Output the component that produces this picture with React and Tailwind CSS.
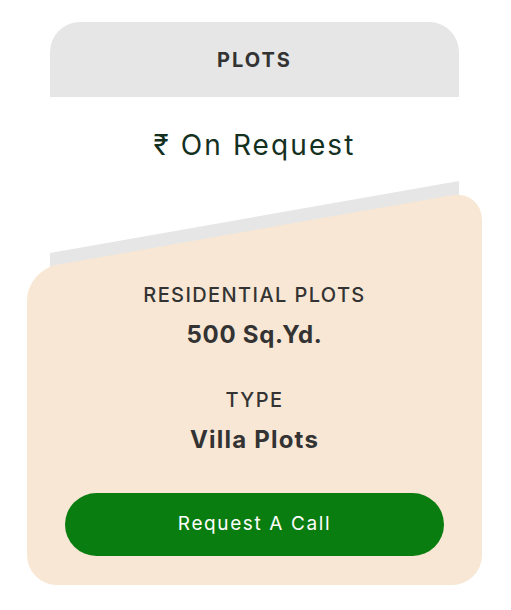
export default function App() {
  const font = { fontFamily: 'Inter, "Noto Sans", sans-serif' }

  return (
    <div className="min-h-screen bg-white pt-[22px]" style={font}>
      {/* Header + price */}
      <div className="ml-[50px] w-[409px]">
        <div className="flex h-[75px] items-center justify-center rounded-t-[30px] bg-[#e6e6e6]">
          <span className="text-[20px] font-bold tracking-[0.1em] text-[#333333]">PLOTS</span>
        </div>
        <div className="flex h-[133px] justify-center pt-[31px]">
          <span className="text-[28px] leading-[34px] tracking-[0.075em] text-[#14301f]">₹ On Request</span>
        </div>
      </div>

      {/* Details card */}
      <div className="relative ml-[27px] w-[455px] pb-[29px]">
        <div className="absolute left-[23px] top-[-13px] h-[100px] w-[409px] skew-y-[-10deg] bg-[#e6e6e6]" />
        <div className="absolute inset-x-0 top-0 h-[200px] skew-y-[-10deg] rounded-[30px] bg-[#f8e7d4]" />
        <div className="absolute inset-x-0 top-[100px] bottom-0 rounded-b-[30px] bg-[#f8e7d4]" />

        <div className="relative flex flex-col items-center pt-[52px] text-[#333333]">
          <div className="text-[20px] font-medium leading-[26px] tracking-[0.07em]">RESIDENTIAL PLOTS</div>
          <div className="mt-[12px] text-[24px] font-bold leading-[30px] tracking-[0.03em]">500 Sq.Yd.</div>
          <div className="mt-[37px] text-[20px] font-medium leading-[26px] tracking-[0.07em]">TYPE</div>
          <div className="mt-[12px] text-[24px] font-bold leading-[30px] tracking-[0.05em]">Villa Plots</div>

          <div className="mt-[38px] w-full px-[38px]">
            <button className="flex h-[63px] w-full items-center justify-center rounded-full bg-[#0a7d10] text-[19px] tracking-[0.085em] text-white">
              Request A Call
            </button>
          </div>
        </div>
      </div>
    </div>
  )
}
